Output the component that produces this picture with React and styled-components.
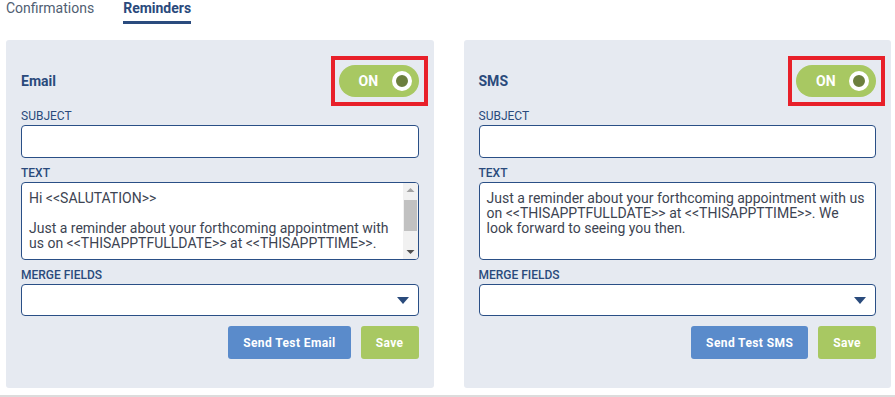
import styled, { createGlobalStyle } from 'styled-components';

const GlobalStyle = createGlobalStyle`
  html, body {
    margin: 0;
    padding: 0;
    background: #fff;
    font-family: Roboto, "Liberation Sans", Arial, sans-serif;
  }
  * {
    box-sizing: border-box;
  }
`;

const emailText = `Hi <<SALUTATION>>

Just a reminder about your forthcoming appointment with us on <<THISAPPTFULLDATE>> at <<THISAPPTTIME>>.

We look forward to seeing you then.

Kind regards
<<PRACTICENAME>>`;

const smsText = `Just a reminder about your forthcoming appointment with us on <<THISAPPTFULLDATE>> at <<THISAPPTTIME>>. We look forward to seeing you then.`;

const panels = [
  { title: 'Email', text: emailText, test: 'Send Test Email', scroll: true },
  { title: 'SMS', text: smsText, test: 'Send Test SMS', scroll: false },
];

const App = () => {
  return (
    <Wrapper>
      <GlobalStyle />
      <Tabs>
        <Tab>Confirmations</Tab>
        <Tab $active>Reminders</Tab>
      </Tabs>
      <Panels>
        {panels.map((p) => (
          <Panel key={p.title}>
            <PanelHeader>
              <Title>{p.title}</Title>
              <ToggleWrap>
                <Toggle>
                  <span>ON</span>
                  <Knob />
                </Toggle>
                <Highlight />
              </ToggleWrap>
            </PanelHeader>

            <Label>SUBJECT</Label>
            <Input type="text" />

            <Label $strong>TEXT</Label>
            <TextWrap>
              <TextArea defaultValue={p.text} $scroll={p.scroll} />
              {p.scroll && (
                <Scrollbar>
                  <svg width="15" height="14" viewBox="0 0 15 14">
                    <path d="M3.5 9 L11.5 9 L7.5 5 Z" fill="#a3a3a3" />
                  </svg>
                  <Thumb />
                  <Track />
                  <svg width="15" height="14" viewBox="0 0 15 14">
                    <path d="M3.5 5 L11.5 5 L7.5 9 Z" fill="#505050" />
                  </svg>
                </Scrollbar>
              )}
            </TextWrap>

            <Label $strong>MERGE FIELDS</Label>
            <Select>
              <svg width="12" height="7" viewBox="0 0 12 7">
                <path d="M0 0 H12 L6 7 Z" fill="#2a4b7c" />
              </svg>
            </Select>

            <Actions>
              <Button $color="#5a8bcb">{p.test}</Button>
              <Button $color="#a8c862">Save</Button>
            </Actions>
          </Panel>
        ))}
      </Panels>
    </Wrapper>
  );
};

const Wrapper = styled.div`
  width: 895px;
  height: 397px;
  padding: 0 4px 7px 6px;
  border-bottom: 2px solid #dcdcdc;
`;

const Tabs = styled.nav`
  display: flex;
  gap: 29px;
  height: 40px;
`;

const Tab = styled.div`
  font-size: 14px;
  line-height: 16px;
  height: 24px;
  color: ${(p) => (p.$active ? '#2a4a7c' : '#505e72')};
  font-weight: ${(p) => (p.$active ? 700 : 400)};
  border-bottom: 3px solid ${(p) => (p.$active ? '#2a4b7e' : 'transparent')};
`;

const Panels = styled.div`
  display: flex;
  gap: 30px;
`;

const Panel = styled.section`
  flex: 1;
  background: #e6eaf1;
  border-radius: 3px;
  padding: 25px 15px 29px;
  display: flex;
  flex-direction: column;
`;

const PanelHeader = styled.div`
  display: flex;
  align-items: center;
  justify-content: space-between;
  height: 32px;
  margin-bottom: 4px;
`;

const Title = styled.h2`
  margin: 0;
  font-size: 14px;
  font-weight: 700;
  color: #2a4a7c;
`;

const ToggleWrap = styled.div`
  position: relative;
`;

const Toggle = styled.div`
  width: 80px;
  height: 32px;
  border-radius: 16px;
  background: #a8c862;
  display: flex;
  align-items: center;
  justify-content: space-between;
  padding: 0 7px 0 20px;
  color: #fff;
  font-size: 14px;
  font-weight: 700;
`;

const Knob = styled.span`
  width: 20px;
  height: 20px;
  border-radius: 50%;
  background: #6c7f3d;
  border: 4px solid #fff;
`;

const Highlight = styled.div`
  position: absolute;
  top: -9px;
  bottom: -9px;
  left: -8px;
  right: -9px;
  border: 4px solid #e8202a;
  pointer-events: none;
`;

const Label = styled.label`
  display: block;
  margin: 8px 0 2px;
  font-size: 12px;
  line-height: 14px;
  font-weight: ${(p) => (p.$strong ? 500 : 400)};
  color: #2a4a7c;
`;

const fieldBase = `
  width: 100%;
  background: #fff;
  border: 1px solid #2a4f86;
  border-radius: 4px;
`;

const Input = styled.input`
  ${fieldBase}
  height: 33px;
`;

const TextWrap = styled.div`
  position: relative;
  height: 78px;
`;

const TextArea = styled.textarea`
  ${fieldBase}
  display: block;
  height: 78px;
  resize: none;
  overflow: hidden;
  padding: 8px ${(p) => (p.$scroll ? '24px' : '7px')} 7px 7px;
  font-family: Roboto, "Liberation Sans", Arial, sans-serif;
  font-size: 14px;
  line-height: 15px;
  color: #3d4452;
  outline: none;
`;

const Scrollbar = styled.div`
  position: absolute;
  top: 1px;
  right: 1px;
  bottom: 1px;
  width: 15px;
  background: #f1f1f1;
  border-radius: 0 3px 3px 0;
  display: flex;
  flex-direction: column;
  align-items: center;
`;

const Thumb = styled.div`
  width: 13px;
  height: 31px;
  margin-top: 3px;
  background: #c1c1c1;
`;

const Track = styled.div`
  flex: 1;
`;

const Select = styled.div`
  ${fieldBase}
  height: 32px;
  display: flex;
  align-items: center;
  justify-content: flex-end;
  padding-right: 9px;
`;

const Actions = styled.div`
  display: flex;
  justify-content: flex-end;
  gap: 10px;
  margin-top: 10px;
`;

const Button = styled.button`
  height: 33px;
  padding: 0 15px;
  border: none;
  border-radius: 3px;
  background: ${(p) => p.$color};
  color: #fff;
  font-family: Roboto, "Liberation Sans", Arial, sans-serif;
  font-size: 12px;
  font-weight: 700;
  letter-spacing: 0.4px;
`;

export default App;
